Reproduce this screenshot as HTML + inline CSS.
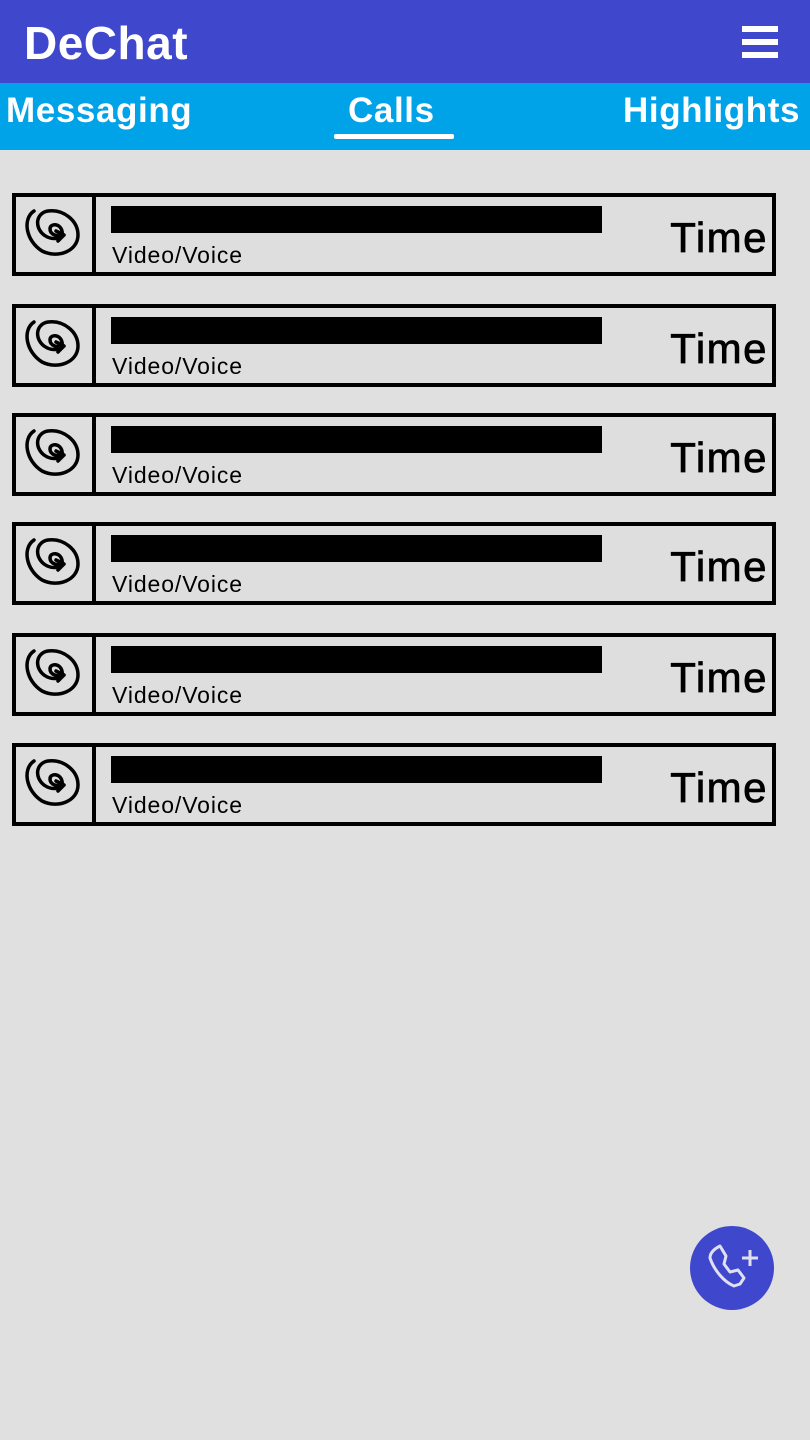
<!DOCTYPE html>
<html><head><style>
body{margin:0;width:810px;height:1440px;background:#e0e0e0;font-family:"Liberation Sans",sans-serif;position:relative;overflow:hidden}
.hdr{position:absolute;left:0;top:0;width:810px;height:83px;background:#3f48cc}
.logo{position:absolute;left:24px;top:16px;color:#fff;font-weight:bold;font-size:46px;letter-spacing:0.5px}
.menu{position:absolute;left:742px;top:26px;width:36px}
.menu div{height:6px;background:#fff;margin-bottom:7px}
.tabs{position:absolute;left:0;top:83px;width:810px;height:67px;background:#00a2e8;color:#fff;font-weight:bold;font-size:35px;letter-spacing:0.6px}
.tabs span{position:absolute;top:8px}
.ul{position:absolute;left:334px;top:134px;width:120px;height:5px;background:#fff;border-radius:2px}
.row{position:absolute;left:12px;width:756px;height:75px;border:4px solid #000;background:#dedede}
.ic{position:absolute;left:0;top:0;width:76px;height:75px;border-right:4px solid #000}
.bar{position:absolute;left:95px;top:9px;width:491px;height:27px;background:#000}
.vv{position:absolute;left:96px;top:45px;font-size:23px;letter-spacing:0.9px}
.t{position:absolute;right:4px;top:17px;font-size:42px;letter-spacing:1.5px;-webkit-text-stroke:0.8px #000}
.fab{position:absolute;left:690px;top:1226px;width:84px;height:84px;border-radius:50%;background:#3f48cc}
</style></head><body>
<div class="hdr"><div class="logo">DeChat</div><div class="menu"><div></div><div></div><div></div></div></div>
<div class="tabs"><span style="left:6px">Messaging</span><span style="left:348px">Calls</span><span style="left:623px">Highlights</span></div>
<div class="ul"></div>

<svg width="0" height="0" style="position:absolute"><defs><symbol id="sp" viewBox="0 0 76 75"><path d="M18 14 C6 22 10 44 26 54 C42 62 62 54 62 38 C62 24 48 12 32 14 C20 16 18 30 28 38 C36 44 48 42 46 34 C44 26 34 26 34 32 C34 38 42 40 48 38 M42 44 L48 38 L40 34" fill="none" stroke="#000" stroke-width="3.5" stroke-linejoin="round" stroke-linecap="round"/></symbol></defs></svg>

<div class="row" style="top:193px"><div class="ic"><svg width="76" height="75"><use href="#sp"/></svg></div><div class="bar"></div><div class="vv">Video/Voice</div><div class="t">Time</div></div>
<div class="row" style="top:304px"><div class="ic"><svg width="76" height="75"><use href="#sp"/></svg></div><div class="bar"></div><div class="vv">Video/Voice</div><div class="t">Time</div></div>
<div class="row" style="top:413px"><div class="ic"><svg width="76" height="75"><use href="#sp"/></svg></div><div class="bar"></div><div class="vv">Video/Voice</div><div class="t">Time</div></div>
<div class="row" style="top:522px"><div class="ic"><svg width="76" height="75"><use href="#sp"/></svg></div><div class="bar"></div><div class="vv">Video/Voice</div><div class="t">Time</div></div>
<div class="row" style="top:633px"><div class="ic"><svg width="76" height="75"><use href="#sp"/></svg></div><div class="bar"></div><div class="vv">Video/Voice</div><div class="t">Time</div></div>
<div class="row" style="top:743px"><div class="ic"><svg width="76" height="75"><use href="#sp"/></svg></div><div class="bar"></div><div class="vv">Video/Voice</div><div class="t">Time</div></div>

<div class="fab"><svg width="84" height="84"><path d="M30 20 L36 30 L34 38 L40 46 L48 44 L54 52 L50 58 L44 60 C34 56 24 44 20 32 C20 26 26 22 30 20 Z" fill="none" stroke="#e0e0f0" stroke-width="3" stroke-linejoin="round"/><path d="M60 24 V40 M52 32 H68" stroke="#e0e0f0" stroke-width="3"/></svg></div>
</body></html>
